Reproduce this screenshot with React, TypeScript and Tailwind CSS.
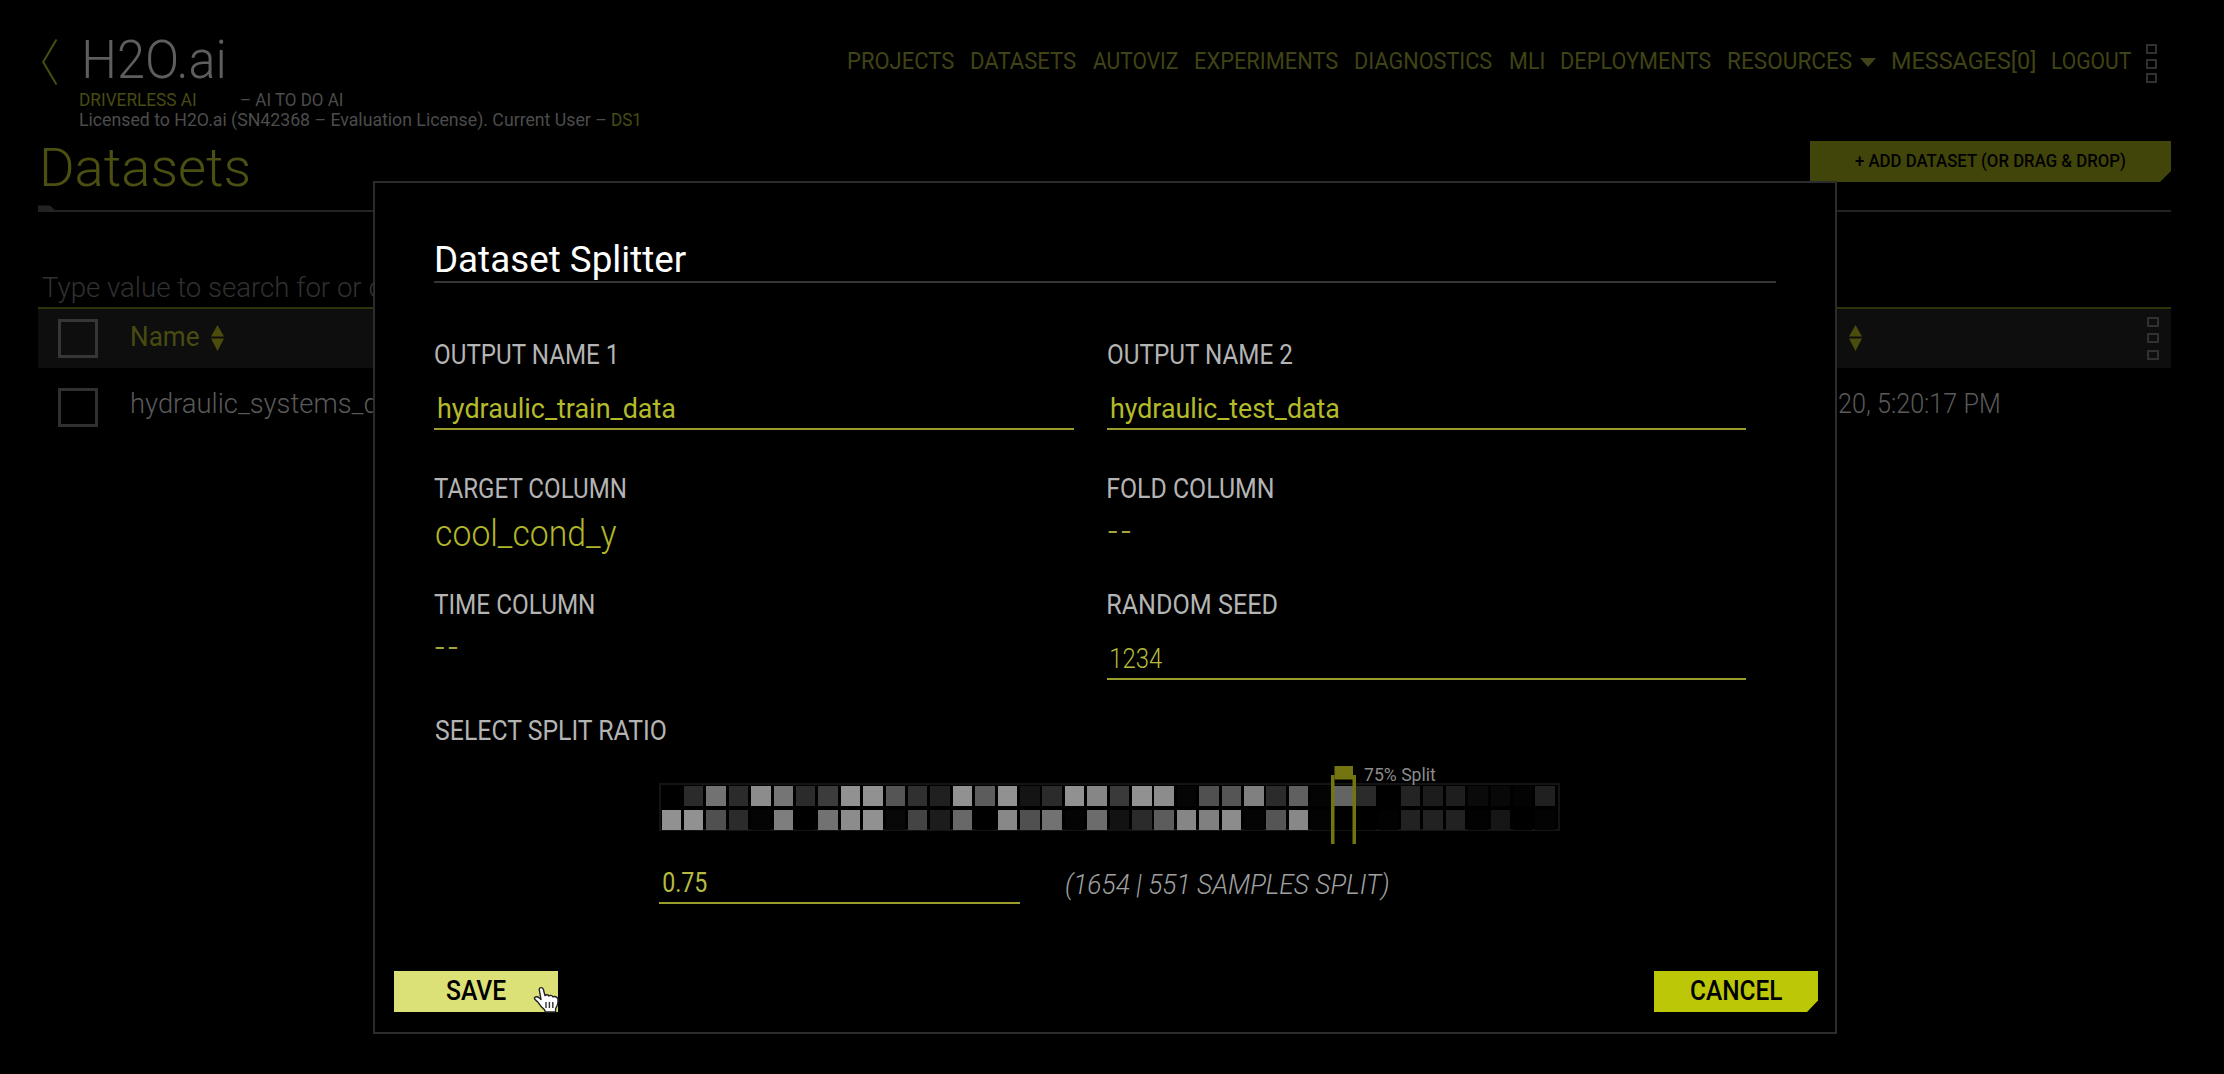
import { useLayoutEffect, useRef } from "react";

/** Single line of text whose drawn glyphs span exactly `w` pixels. */
function Fit({ w, text, className = "" }: { w: number; text: string; className?: string }) {
  const ref = useRef<HTMLSpanElement>(null);
  useLayoutEffect(() => {
    const el = ref.current;
    const ctx = document.createElement("canvas").getContext("2d");
    if (!el || !ctx) return;
    const cs = getComputedStyle(el);
    ctx.font = `${cs.fontStyle} ${cs.fontWeight} ${cs.fontSize} ${cs.fontFamily}`;
    if (cs.letterSpacing !== "normal") ctx.letterSpacing = cs.letterSpacing;
    const m = ctx.measureText(text);
    const ink = m.actualBoundingBoxRight + m.actualBoundingBoxLeft;
    const s = w / ink;
    el.style.transform = `translateX(${m.actualBoundingBoxLeft * s}px) scaleX(${s})`;
  }, [w, text]);
  return (
    <span className={`block shrink-0 whitespace-pre ${className}`} style={{ width: w }}>
      <span ref={ref} className="inline-block origin-left">
        {text}
      </span>
    </span>
  );
}

const NAV_A: [string, number][] = [
  ["PROJECTS", 106],
  ["DATASETS", 105],
  ["AUTOVIZ", 85],
  ["EXPERIMENTS", 143],
  ["DIAGNOSTICS", 137],
  ["MLI", 34],
  ["DEPLOYMENTS", 150],
];

const ROW_1 = [
  "#000000", "#2b2b2b", "#727272", "#2b2b2b", "#8c8c8c", "#757575", "#2b2b2b", "#3c3c3c", "#919191", "#919191",
  "#555555", "#303030", "#202020", "#919191", "#5c5c5c", "#919191", "#141414", "#2b2b2b", "#919191", "#868686",
  "#3a3a3a", "#919191", "#8c8c8c", "#050505", "#505050", "#555555", "#808080", "#2b2b2b", "#606060", "#040404",
  "#646464", "#2b2b2b", "#000000", "#242424", "#1c1c1c", "#1e1e1e", "#0a0a0a", "#080808", "#030303", "#202020",
];
const ROW_2 = [
  "#919191", "#919191", "#505050", "#2b2b2b", "#040404", "#7e7e7e", "#000000", "#727272", "#8c8c8c", "#919191",
  "#080808", "#444444", "#1c1c1c", "#686868", "#000000", "#888888", "#505050", "#727272", "#040404", "#6c6c6c",
  "#121212", "#2b2b2b", "#5c5c5c", "#868686", "#808080", "#8c8c8c", "#040404", "#555555", "#888888", "#030303",
  "#000000", "#000000", "#020202", "#222222", "#222222", "#222222", "#020202", "#161616", "#000000", "#030303",
];

function Sort() {
  return (
    <svg width="13" height="26" viewBox="0 0 13 26" fill="#4a4d0c">
      <path d="M6.5 0 L13 11.5 H0 Z M0 13.5 H13 L6.5 26 Z" />
    </svg>
  );
}

function Squares({ className = "" }: { className?: string }) {
  return (
    <div className={`flex shrink-0 flex-col ${className}`}>
      <div className="h-[10px] w-full border-[2.5px] border-[#303030]" />
      <div className="h-[10px] w-full border-[2.5px] border-[#303030]" />
      <div className="h-[10px] w-full border-[2.5px] border-[#303030]" />
    </div>
  );
}

const LABEL = "text-[27.5px] leading-[30px] text-[#b4b4b4]";

function Field({ label, lw, value, vw, light = false }: { label: string; lw: number; value: string; vw: number; light?: boolean }) {
  return (
    <div>
      <Fit w={lw} text={label} className={`ml-px ${LABEL}`} />
      <div className="h-[60px] w-[639.5px] border-b-[2px] border-[#9a9d2c] pl-[4px] pt-[19px]">
        <Fit
          w={vw}
          text={value}
          className={light ? "text-[27.5px] font-light leading-[39px] text-[#b4b93c]" : "text-[27.5px] leading-[39px] text-[#b4bb2a]"}
        />
      </div>
    </div>
  );
}

function Dash() {
  return <Fit w={22} text="--" className="ml-px mt-[13.5px] text-[27px] leading-[26px] tracking-[3px] text-[#a5a63c]" />;
}

export default function App() {
  return (
    <div className="relative h-[1074px] w-[2224px] overflow-hidden bg-black font-[Roboto,sans-serif]">
      <div className="pl-[38px] pr-[53px]">
        <header className="flex h-[127px] justify-between">
          <div className="flex pl-[4px] pt-[33px]">
            <svg className="mt-[6px]" width="15" height="46" viewBox="0 0 15 46" fill="none" stroke="#4a4d12" strokeWidth="2">
              <path d="M14.5 0.5 L1.2 23 L14.5 45.5" />
            </svg>
            <div className="pl-[23px]">
              <Fit w={139} text="H2O.ai" className="ml-[4.5px] text-[54px] font-light leading-[54px] text-[#5e5e5e]" />
              <div className="flex gap-[45px] text-[17.5px] leading-[27px]">
                <Fit w={116} text="DRIVERLESS AI" className="text-[#484b14]" />
                <Fit w={102} text="– AI TO DO AI" className="text-[#4c4c4c]" />
              </div>
              <div className="flex gap-[6px] text-[18px] leading-[12px]">
                <Fit w={526} text="Licensed to H2O.ai (SN42368 – Evaluation License). Current User –" className="text-[#4c4c4c]" />
                <Fit w={27} text="DS1" className="text-[#484b14]" />
              </div>
            </div>
          </div>
          <nav className="mr-[14px] flex h-[42px] gap-[17.1px] pt-[40px] text-[24px] leading-[42px] text-[#404315]">
            {NAV_A.map(([t, w]) => (
              <Fit key={t} w={w} text={t} />
            ))}
            <div className="flex gap-[8px]">
              <Fit w={124} text="RESOURCES" />
              <svg className="mt-[18px]" width="16" height="9" viewBox="0 0 16 9" fill="#404315">
                <path d="M0 0 H16 L8 9 Z" />
              </svg>
            </div>
            <Fit w={143} text="MESSAGES[0]" className="-ml-px" />
            <Fit w={79} text="LOGOUT" />
            <Squares className="-ml-[2px] mt-[4px] h-[39px] w-[11px] justify-between" />
          </nav>
        </header>
        <div className="flex h-[78px] justify-between">
          <Fit w={206} text="Datasets" className="ml-[5px] text-[53.5px] font-light leading-[82px] text-[#4c4f12]" />
          <button className="mt-[14px] flex h-[41px] w-[361px] items-center bg-[#42450a] pb-[2px] pl-[45px] text-[18px] font-medium text-black [clip-path:polygon(0_0,100%_0,100%_30px,350px_100%,0_100%)]">
            <Fit w={271} text="+ ADD DATASET (OR DRAG & DROP)" />
          </button>
        </div>
        <div className="h-[7px] border-b-2 border-[#232323]">
          <svg width="18" height="6" viewBox="0 0 18 6" fill="#232323">
            <path d="M0 0.5 H12 L18 6 H0 Z" />
          </svg>
        </div>
        <div className="h-[97px] border-b-2 border-[#30320c] pl-[4px] pt-[56px]">
          <Fit w={575} text="Type value to search for or click for suggestions" className="text-[27.5px] font-light leading-[39px] text-[#303030]" />
        </div>
        <div className="flex h-[58.5px] items-center bg-[#0e0e0e] pl-[20px] pr-[12px]">
          <div className="h-[39px] w-[40px] border-[3px] border-[#363636]" />
          <Fit w={67} text="Name" className="ml-[34px] pb-[2px] text-[27.5px] leading-[30px] text-[#484b12]" />
          <div className="ml-[12px]">
            <Sort />
          </div>
          <div className="ml-auto mr-[285px]">
            <Sort />
          </div>
          <Squares className="h-[43px] w-[12px] justify-between" />
        </div>
        <div className="flex h-[79px] items-center pl-[20px]">
          <div className="h-[39px] w-[40px] border-[3px] border-[#303030]" />
          <Fit w={283} text="hydraulic_systems_data" className="ml-[34px] pb-[6px] text-[27.5px] font-light leading-[30px] text-[#5a5a5a]" />
          <Fit w={160} text="20, 5:20:17 PM" className="ml-auto mr-[172.5px] pb-[6px] text-[27.5px] font-light leading-[30px] text-[#5a5a5a]" />
        </div>
      </div>

      <div role="dialog" className="absolute left-[373px] top-[181px] flex h-[853px] w-[1464px] flex-col justify-between border-2 border-[#2c2c2c] bg-black">
        <div className="pl-[59px] pt-[52px]">
          <div className="h-[48px] w-[1342px] border-b-2 border-[#353535]">
            <Fit w={250} text="Dataset Splitter" className="ml-[2px] text-[36px] leading-[50px] text-white" />
          </div>
          <div className="mt-[57px] grid grid-cols-[672.5px_672.5px]">
            <Field label="OUTPUT NAME 1" lw={180} value="hydraulic_train_data" vw={237} />
            <Field label="OUTPUT NAME 2" lw={185} value="hydraulic_test_data" vw={228} />
          </div>
          <div className="mt-[44px] grid h-[90px] grid-cols-[672.5px_672.5px]">
            <div>
              <Fit w={192} text="TARGET COLUMN" className={LABEL} />
              <Fit w={181} text="cool_cond_y" className="ml-[2px] text-[37px] font-light leading-[60px] text-[#b0b72a]" />
            </div>
            <div>
              <Fit w={165} text="FOLD COLUMN" className={`ml-px ${LABEL}`} />
              <Dash />
            </div>
          </div>
          <div className="mt-[26px] grid grid-cols-[672.5px_672.5px]">
            <div>
              <Fit w={160} text="TIME COLUMN" className={LABEL} />
              <Dash />
            </div>
            <Field label="RANDOM SEED" lw={169} value="1234" vw={51} light />
          </div>
          <Fit w={231} text="SELECT SPLIT RATIO" className={`ml-[2px] mt-[36px] ${LABEL}`} />
          <div className="ml-[224.5px] mt-[36.5px] w-[901px]">
            <div className="relative h-[48px] border-2 border-[#141414]">
              <div className="grid grid-cols-[repeat(40,22.42px)] gap-y-[4.5px] pl-[1px] pt-[1px]">
                {[...ROW_1, ...ROW_2].map((c, i) => (
                  <div key={i} className="h-[20px] w-[19.5px]" style={{ backgroundColor: c }} />
                ))}
              </div>
              <div className="absolute -top-[19px] left-[670.5px] flex items-start">
                <svg width="25" height="78" viewBox="0 0 25 78">
                  <path d="M3.5 0 H22 V13.5 H3.5 Z" fill="#737610" />
                  <path d="M0 9 H3.5 V78 H0 Z M21.5 9 H25 V78 H21.5 Z" fill="#737610" />
                </svg>
                <Fit w={72} text="75% Split" className="ml-[8px] text-[18px] leading-[18px] text-[#8c8c8c]" />
              </div>
            </div>
            <div className="flex">
              <div className="h-[73.5px] w-[361px] border-b-[2px] border-[#9a9d2c] pl-[4px] pt-[33px]">
                <Fit w={44} text="0.75" className="text-[27.5px] leading-[38px] text-[#b4bb40]" />
              </div>
              <Fit w={322} text="(1654 | 551 SAMPLES SPLIT)" className="ml-[46px] mt-[35px] text-[27.5px] font-light italic leading-[38px] text-[#a0a0a0]" />
            </div>
          </div>
        </div>
        <div className="flex justify-between pb-[20px] pl-[19px] pr-[17px]">
          <button className="relative flex h-[41.5px] w-[164px] items-center bg-[#dbe077] pl-[52px] text-[27px] font-medium text-black">
            <Fit w={60} text="SAVE" />
            <svg className="absolute left-[139px] top-[15px]" width="28" height="29" viewBox="0 0 28 29">
              <path
                d="M6.2 3.2 C6.6 1.2 9.6 1 10.3 3.2 L12 9.6 C12.8 8.4 15.4 8.4 15.9 10 C17 8.9 19.3 9.2 19.8 10.8 C21.4 9.9 24.6 10.8 24.9 13.2 C25.3 17 24.4 20 22.6 22.6 L22.6 26 H12.4 L11.4 23.6 C8.6 21.6 6.8 19 5.2 16.6 C4 14.8 1.6 14.2 1.4 12 C2 10.2 4.8 10.6 6 11.8 L8 13.6 Z"
                fill="#ffffff"
                stroke="#222222"
                strokeWidth="1.4"
                strokeLinejoin="round"
              />
              <path d="M13 16 V22 M16.4 16 V22 M19.8 16 V22" stroke="#333333" strokeWidth="1.4" />
            </svg>
          </button>
          <button className="flex h-[41.5px] w-[164px] items-center bg-[#bcc807] pl-[37px] text-[27px] font-medium text-black [clip-path:polygon(0_0,100%_0,100%_30px,153px_100%,0_100%)]">
            <Fit w={91} text="CANCEL" />
          </button>
        </div>
      </div>
    </div>
  );
}
